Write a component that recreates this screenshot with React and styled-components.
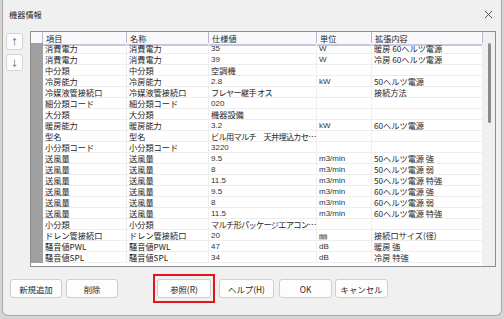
import React from "react";
import styled, { createGlobalStyle } from "styled-components";

const GlobalStyle = createGlobalStyle`
  html, body {
    margin: 0;
    padding: 0;
    background: #d4d4d4;
  }
  body {
    font-family: "Noto Sans CJK JP", "Noto Sans", sans-serif;
    color: #1e1e1e;
  }
`;

const Window = styled.div`
  box-sizing: border-box;
  width: 500px;
  height: 316px;
  margin-left: 2px;
  background: #f0f0f0;
  border: 1px solid #a9a9a9;
  border-top: none;
  border-radius: 0 0 6px 6px;
  display: flex;
  flex-direction: column;
`;

const TitleBar = styled.div`
  height: 28px;
  display: flex;
  align-items: center;
  justify-content: space-between;
  padding: 0 6px 0 6px;
  font-size: 8.2px;
  line-height: 1;
`;

const Close = styled.svg`
  width: 9px;
  height: 9px;
  margin-right: 2px;
`;

const Main = styled.div`
  display: flex;
  margin-top: 3px;
  height: 236px;
`;

const ArrowColumn = styled.div`
  width: 27px;
  box-sizing: border-box;
  padding: 2px 0 0 3px;
  display: flex;
  flex-direction: column;
  gap: 4px;
`;

const ArrowButton = styled.div`
  box-sizing: border-box;
  width: 17px;
  height: 17px;
  background: #fdfdfd;
  border: 1px solid #d3d3d3;
  border-radius: 3px;
  display: flex;
  align-items: center;
  justify-content: center;
  font-size: 8px;
  color: #4d5d7d;
`;

const Table = styled.div`
  box-sizing: border-box;
  width: 466px;
  height: 236px;
  border: 1px solid #8a8d94;
  background: #fff;
  display: flex;
  overflow: hidden;
`;

const Grid = styled.div`
  width: 452px;
  display: grid;
  grid-template-columns: 12px 84px 82px 108px 55px 111px;
  grid-auto-rows: 11px;
  align-content: start;
  overflow: hidden;
`;

const HeadCell = styled.div`
  box-sizing: border-box;
  height: 14px;
  background: #f9f9fb;
  border-bottom: 2px solid #c6c6dc;
  border-right: 1px solid #b8b8d2;
  padding: 1px 0 0 3px;
  font-size: 8.2px;
  line-height: 11px;
  white-space: nowrap;
  overflow: hidden;
`;

const RowHead = styled.div`
  background: #a0a0a0;
`;

const Cell = styled.div`
  box-sizing: border-box;
  box-shadow: inset -1px -1px 0 #eeeeee;
  padding-left: 2px;
  font-size: ${(p) => (p.$latin ? "8px" : "8.2px")};
  font-family: ${(p) =>
    p.$latin ? '"Liberation Sans", "Noto Sans CJK JP", sans-serif' : "inherit"};
  letter-spacing: ${(p) => (p.$tight ? "-0.7px" : "0")};
  color: ${(p) => (p.$latin ? "#333" : "#1e1e1e")};
  line-height: 11px;
  white-space: nowrap;
  overflow: hidden;
  text-overflow: ellipsis;
`;

const Scrollbar = styled.div`
  width: 12px;
  background: #f0f0f0;
  display: flex;
  justify-content: center;
  padding-top: 11px;
`;

const Thumb = styled.div`
  width: 3px;
  height: 80px;
  border-radius: 2px;
  background: #8b8b8b;
`;

const Footer = styled.div`
  display: flex;
  align-items: center;
  padding: 7px 0 0 7px;
`;

const Button = styled.div`
  box-sizing: border-box;
  width: ${(p) => p.$w || 52}px;
  height: 19px;
  margin-left: ${(p) => p.$gap || 0}px;
  background: #fdfdfd;
  border: 1px solid #d0d0d0;
  border-radius: 3px;
  display: flex;
  align-items: center;
  justify-content: center;
  font-size: 8.4px;
  color: #1e1e1e;
  white-space: nowrap;
`;

const Highlight = styled.div`
  margin-left: ${(p) => p.$gap}px;
  padding: 3px 2px;
  border: 2px solid #e3141b;
`;

const rows = [
  ["消費電力", "消費電力", "35", "W", "暖房 60ヘルツ電源"],
  ["消費電力", "消費電力", "39", "W", "冷房 60ヘルツ電源"],
  ["中分類", "中分類", "空調機", "", ""],
  ["冷房能力", "冷房能力", "2.8", "kW", "50ヘルツ電源"],
  ["冷媒液管接続口", "冷媒液管接続口", "フレヤー継手 オス", "", "接続方法"],
  ["細分類コード", "細分類コード", "020", "", ""],
  ["大分類", "大分類", "機器設備", "", ""],
  ["暖房能力", "暖房能力", "3.2", "kW", "60ヘルツ電源"],
  ["型名", "型名", "ビル用マルチ　天井埋込カセット形", "", ""],
  ["小分類コード", "小分類コード", "3220", "", ""],
  ["送風量", "送風量", "9.5", "m3/min", "50ヘルツ電源 強"],
  ["送風量", "送風量", "8", "m3/min", "50ヘルツ電源 弱"],
  ["送風量", "送風量", "11.5", "m3/min", "50ヘルツ電源 特強"],
  ["送風量", "送風量", "9.5", "m3/min", "60ヘルツ電源 強"],
  ["送風量", "送風量", "8", "m3/min", "60ヘルツ電源 弱"],
  ["送風量", "送風量", "11.5", "m3/min", "60ヘルツ電源 特強"],
  ["小分類", "小分類", "マルチ形パッケージエアコン(空冷式)", "", ""],
  ["ドレン管接続口", "ドレン管接続口", "20", "㎜", "接続口サイズ(径)"],
  ["騒音値PWL", "騒音値PWL", "47", "dB", "暖房 強"],
  ["騒音値SPL", "騒音値SPL", "34", "dB", "冷房 特強"],
];

const headers = ["項目", "名称", "仕様値", "単位", "拡張内容"];

const isLatin = (s) => /^[0-9A-Za-z./]+$/.test(s);

const App = () => {
  return (
    <>
      <GlobalStyle />
      <Window>
        <TitleBar>
          <span>機器情報</span>
          <Close viewBox="0 0 10 10">
            <path d="M1 1 L9 9 M9 1 L1 9" stroke="#333" strokeWidth="0.9" />
          </Close>
        </TitleBar>
        <Main>
          <ArrowColumn>
            <ArrowButton>↑</ArrowButton>
            <ArrowButton>↓</ArrowButton>
          </ArrowColumn>
          <Table>
            <Grid>
              <HeadCell />
              {headers.map((h) => (
                <HeadCell key={h}>{h}</HeadCell>
              ))}
              {rows.map((row, i) => (
                <React.Fragment key={i}>
                  <RowHead />
                  {row.map((v, j) => {
                    const latin = v !== "" && isLatin(v);
                    return (
                      <Cell
                        key={j}
                        $latin={latin}
                        $tight={j === 2 && !latin && v.length > 6}
                      >
                        {v}
                      </Cell>
                    );
                  })}
                </React.Fragment>
              ))}
            </Grid>
            <Scrollbar>
              <Thumb />
            </Scrollbar>
          </Table>
        </Main>
        <Footer>
          <Button>新規追加</Button>
          <Button $gap={4}>削除</Button>
          <Highlight $gap={35}>
            <Button $w={54}>参照(R)</Button>
          </Highlight>
          <Button $gap={4} $w={55}>ヘルプ(H)</Button>
          <Button $gap={5} $w={53}>OK</Button>
          <Button $gap={3} $w={53}>キャンセル</Button>
        </Footer>
      </Window>
    </>
  );
};

export default App;
